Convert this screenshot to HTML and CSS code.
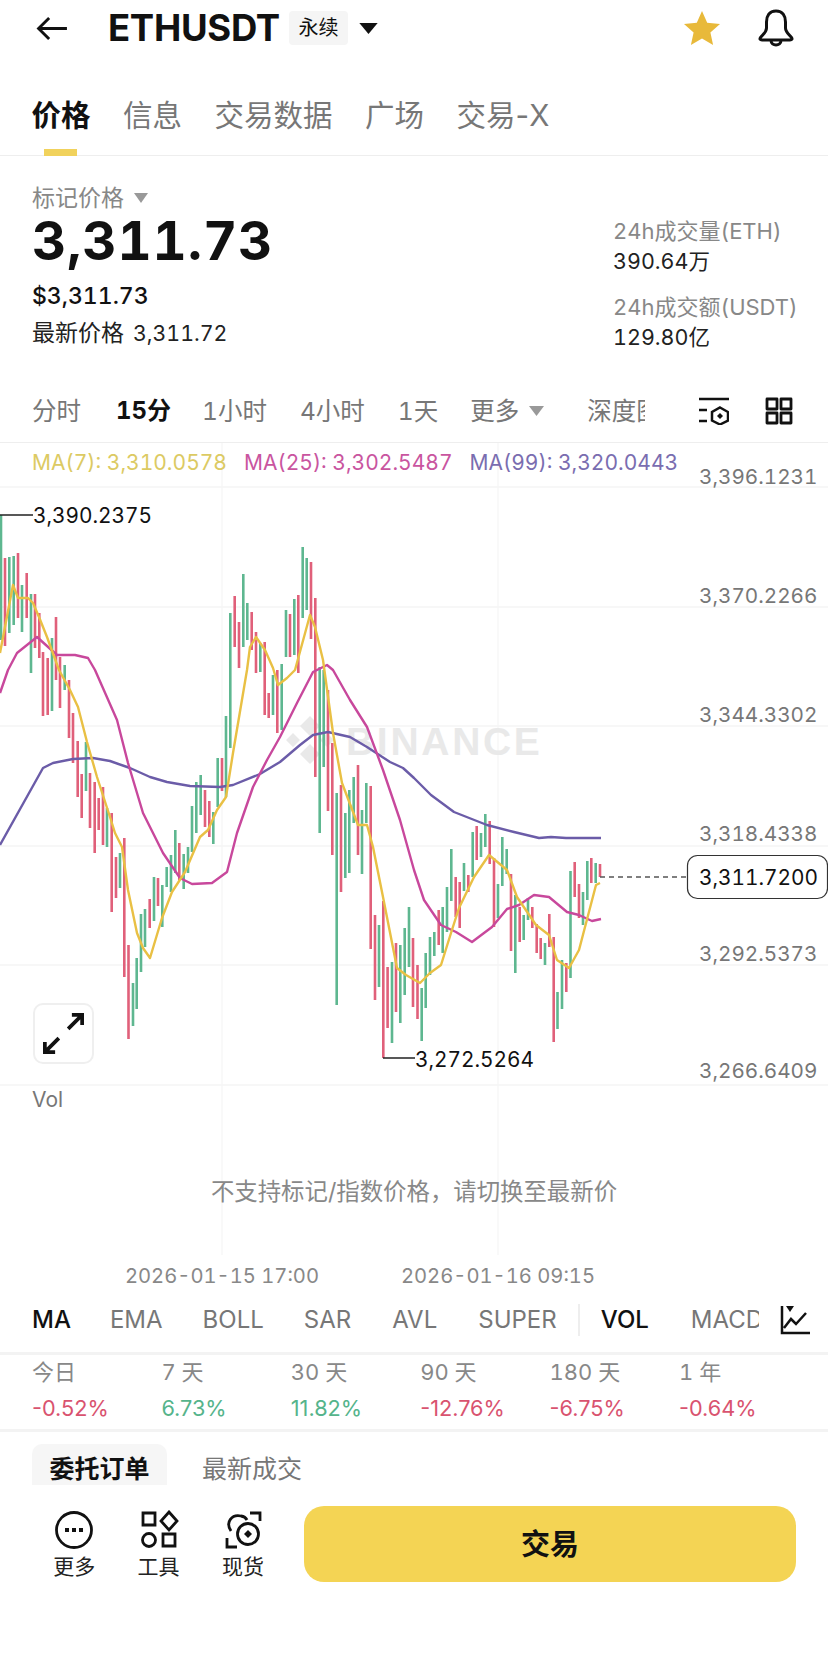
FILE: index.html
```html
<!DOCTYPE html>
<html lang="zh-CN">
<head>
<meta charset="utf-8">
<title>ETHUSDT</title>
<link rel="stylesheet" href="styles.css">
</head>
<body>
<div class="page">
  <header class="top">
    <svg class="ic-back" viewBox="0 0 34 26"><path d="M32 13H3M13.500 2 2.500 13 13.500 24"/></svg>
    <h1 class="symbol">ETHUSDT</h1>
    <span class="badge">永续</span>
    <svg class="caret-lg" viewBox="0 0 20 12"><path d="M0 0H20L10 12Z"/></svg>
    <svg class="ic-star" viewBox="0 0 36 34"><path d="M18 0 23.200 11.700 36 13 26.400 21.500 29.100 34 18 27.600 6.900 34 9.600 21.500 0 13 12.800 11.700Z"/></svg>
    <svg class="ic-bell" viewBox="0 0 38 38"><path d="M19 2C12 2 9.500 7.500 9.500 13V19C9.500 23 6.500 25 3.500 28.500 2.500 30 3 31 5 31H33C35 31 35.500 30 34.500 28.500 31.500 25 28.500 23 28.500 19V13C28.500 7.500 26 2 19 2ZM14 31.500C14 34.500 16.500 36 19 36S24 34.500 24 31.500"/></svg>
  </header>

  <nav class="tabs">
    <a class="tab tab-on">价格</a>
    <a class="tab">信息</a>
    <a class="tab">交易数据</a>
    <a class="tab">广场</a>
    <a class="tab">交易-X</a>
    <i class="tab-mark"></i>
  </nav>

  <section class="stats">
    <div class="stats-left">
      <div class="mark-label">标记价格<svg class="caret-sm" viewBox="0 0 14 10"><path d="M0 0H14L7 10Z"/></svg></div>
      <div class="big-price">3,311.73</div>
      <div class="usd-price">$3,311.73</div>
      <div class="last-price">最新价格<span class="last-num">3,311.72</span></div>
    </div>
    <div class="stats-right">
      <div class="stat-k">24h成交量(ETH)</div>
      <div class="stat-v">390.64万</div>
      <div class="stat-k stat-gap">24h成交额(USDT)</div>
      <div class="stat-v">129.80亿</div>
    </div>
  </section>

  <div class="intervals">
    <span class="iv iv-1">分时</span>
    <span class="iv iv-2">15分</span>
    <span class="iv iv-3">1小时</span>
    <span class="iv iv-4">4小时</span>
    <span class="iv iv-5">1天</span>
    <span class="iv iv-6">更多<svg class="caret-iv" viewBox="0 0 15 10"><path d="M0 0H15L7.500 10Z"/></svg></span>
    <span class="iv iv-7">深度图</span>
    <svg class="ic-layer" viewBox="0 0 30 28"><path d="M0 2H30M0 13H8M0 24H8"/><path d="M21 10.500 29 15V23.500L21 27.500 13 23.500V15Z"/><path class="fill" d="M21 16 24 19 21 22 18 19Z"/></svg>
    <svg class="ic-grid" viewBox="0 0 28 28"><path d="M2 2H12V12H2ZM16 2H26V12H16ZM2 16H12V26H2ZM16 16H26V26H16Z"/></svg>
  </div>

  <div class="chart">
    <svg class="chart-svg" viewBox="0 443 828 847">
      <path class="grid" d="M0 487H828M0 607H828M0 726H828M0 846H828M0 965H828M0 1085H828"/>
      <path class="grid-v" d="M222 443V1255M498 443V1255"/>
      <g class="wm">
        <path d="M310 716 320 726 310 736 300 726ZM293 733 300 740 293 747 286 740ZM327 733 334 740 327 747 320 740ZM310 744 320 754 310 764 300 754Z"/>
        <text class="wm-text" x="346" y="755">BINANCE</text>
      </g>
      <path class="bars-g" d="M1 515V640M9.300 557V633M13.700 556V625M22 585V632M31 594V673M52 638V711M64.700 665V690M86 742V791M107 808V847M120 853V888M133 983V1026M136.700 958V1009M141 914V972M145 909V947M154 877V921M162.300 885V927M166.700 867V887M171 855V892M175.300 830V873M183.700 854V889M188 847V873M192 806V852M196.300 782V833M200.700 775V815M213.300 812V844M217.700 758V807M226 716V797M230.300 613V748M243.300 574V647M247.300 603V640M260.300 643V672M273 675V715M281.700 664V730M286 610V657M294.300 599V655M302.700 547V618M306.700 558V610M319.700 667V833M323.700 670V767M336.700 793V1005M345.300 813V878M349.300 790V873M353.700 777V823M362 810V874M366.300 783V823M379 925V987M392 962V1043M400.300 945V1023M404.700 928V995M409 907V967M421.700 988V1041M425.700 953V1008M430 937V975M434.300 932V956M442.700 907V953M447 887V932M451.300 849V901M464 863V891M472.700 832V877M481 833V857M485.300 814V847M498 884V918M502.300 837V886M506.700 849V874M515.300 895V973M523.700 915V940M528 898V920M545 943V965M557.500 992V1029M562 960V1009M570.500 871V978M583 892V925M587.300 861V900M595.700 863V883"/>
      <path class="bars-r" d="M5 558V646M18 553V618M26.700 573V618M35 594V648M39.300 613V658M43 652V716M47.700 658V715M56 617V680M60 657V708M69 680V738M73 713V763M77.700 741V797M81.700 774V818M90 773V828M94.700 782V853M98.700 798V830M103 787V845M111.700 813V912M116 857V898M124.300 838V977M128.500 945V1039M149.700 899V928M158 878V906M179.300 843V880M205 790V827M209.300 801V837M222 758V791M234.700 596V647M239 622V668M251.700 612V650M256 632V673M264.700 642V715M268.700 693V718M277.300 670V733M290 614V657M298.300 595V673M311 562V639M315.300 598V777M328 690V811M332.300 743V855M341 785V892M358 765V855M370.700 786V949M375 915V1000M383.300 901V1058M387.600 967V1028M396 943V1012M413 938V1007M417.500 965V1019M438.700 910V945M455.700 877V917M459.700 882V928M468.300 875V892M476.700 826V860M489.700 821V864M494 858V927M511 874V951M519.700 907V942M532.300 907V928M536.700 924V953M540.700 938V959M549.300 914V947M553.700 937V1042M566.300 963V992M574.700 862V897M579 884V918M591.300 858V883M600 864V877"/>
      <polyline class="ma99" points="0,845 43,768 53,763 73,759 93,758 110,761 130,768 150,777 167,782 190,786 220,787 233,785 260,774 280,762 300,745 313,735 328,732 350,737 367,747 390,762 403,768 414,778 431,795 454,812 487,825 514,832 539,838 551,837 566,838 601,838"/>
      <polyline class="ma25" points="0,693 8,670 17,653 37,637 57,655 75,655 88,658 95,670 117,720 128,763 143,813 163,853 180,878 192,884 212,883 227,872 237,833 253,787 267,760 280,737 297,703 313,672 327,665 333,670 350,700 367,727 383,770 400,820 414,870 424,900 441,925 456,932 472,942 492,927 507,909 519,905 534,895 549,897 567,912 579,915 592,921 601,919"/>
      <polyline class="ma7" points="0,653 13,585 18,598 28,598 33,603 39,617 47,637 59,670 70,690 78,707 87,742 97,777 110,817 115,833 122,847 128,890 137,933 143,948 150,958 162,918 172,892 185,872 200,837 208,830 217,810 226,797 233,753 247,670 250,647 256,637 265,650 273,668 278,685 287,678 295,670 310,615 315,627 323,660 333,733 342,783 358,825 367,825 373,847 383,897 397,968 406,975 420,983 430,973 441,965 451,933 459,908 474,877 489,855 507,870 517,897 536,925 549,935 557,960 569,968 579,950 596,885 600,883"/>
      <path class="marker" d="M0 515H33M383 1058H415"/>
      <path class="dash" d="M600 877H687"/>
      <text class="lbl" x="33" y="523">3,390.2375</text>
      <text class="lbl" x="415" y="1067">3,272.5264</text>
      <text class="axis" x="699" y="484">3,396.1231</text>
      <text class="axis" x="699" y="603">3,370.2266</text>
      <text class="axis" x="699" y="722">3,344.3302</text>
      <text class="axis" x="699" y="841">3,318.4338</text>
      <text class="axis" x="699" y="961">3,292.5373</text>
      <text class="axis" x="699" y="1078">3,266.6409</text>
      <rect class="tag" x="687.500" y="855.500" width="140" height="43" rx="10"/>
      <text class="lbl" x="699" y="885">3,311.7200</text>
      <text class="vol" x="32" y="1107">Vol</text>
      <text class="note" x="414" y="1200">不支持标记/指数价格，请切换至最新价</text>
      <text class="date" x="222" y="1283">2026-01-15 17:00</text>
      <text class="date" x="498" y="1283">2026-01-16 09:15</text>
    </svg>
    <div class="ma-row">
      <span class="ma-y">MA(7): 3,310.0578</span>
      <span class="ma-p">MA(25): 3,302.5487</span>
      <span class="ma-v">MA(99): 3,320.0443</span>
    </div>
    <button class="expand">
      <svg viewBox="0 0 44 44"><path d="M2 42 17 27M2 31V42H13M42 2 27 17M31 2H42V13"/></svg>
    </button>
  </div>

  <div class="inds">
    <span class="ind ind-on">MA</span>
    <span class="ind ind-b">EMA</span>
    <span class="ind ind-c">BOLL</span>
    <span class="ind ind-d">SAR</span>
    <span class="ind ind-e">AVL</span>
    <span class="ind ind-f">SUPER</span>
    <i class="ind-div"></i>
    <span class="ind ind-on ind-g">VOL</span>
    <span class="ind ind-h">MACD</span>
    <svg class="ic-kline" viewBox="0 0 30 30"><path d="M2 1V28H30M4 23 11 14 16 19 26 8"/><path class="fill" d="M6 1H14L10 7Z"/></svg>
  </div>

  <div class="perf">
    <div class="perf-c"><span class="perf-k">今日</span><span class="perf-v neg">-0.52%</span></div>
    <div class="perf-c"><span class="perf-k">7 天</span><span class="perf-v pos">6.73%</span></div>
    <div class="perf-c"><span class="perf-k">30 天</span><span class="perf-v pos">11.82%</span></div>
    <div class="perf-c"><span class="perf-k">90 天</span><span class="perf-v neg">-12.76%</span></div>
    <div class="perf-c"><span class="perf-k">180 天</span><span class="perf-v neg">-6.75%</span></div>
    <div class="perf-c"><span class="perf-k">1 年</span><span class="perf-v neg">-0.64%</span></div>
  </div>

  <div class="book-tabs">
    <span class="book-tab book-on">委托订单</span>
    <span class="book-tab">最新成交</span>
  </div>

  <footer class="bar">
    <div class="tool">
      <svg viewBox="0 0 40 40"><circle cx="20" cy="20" r="17.500"/><path class="fill" d="M11 18H15V22H11ZM18 18H22V22H18ZM25 18H29V22H25Z"/></svg>
      <span>更多</span>
    </div>
    <div class="tool">
      <svg viewBox="0 0 40 40"><path d="M4 3H16V15H4ZM30 2 38 11 30 20 22 11ZM24 24H36V36H24Z"/><circle cx="10" cy="30" r="6.500"/></svg>
      <span>工具</span>
    </div>
    <div class="tool">
      <svg viewBox="0 0 40 40"><path d="M27 3H37V11M14 37H4V28"/><path d="M8 21C2 12 9 4 18 6 21 6.500 23 8 24 10"/><circle cx="25" cy="24" r="10.500"/><path class="fill" d="M25 20 29 24 25 28 21 24Z"/></svg>
      <span>现货</span>
    </div>
    <button class="trade">交易</button>
  </footer>
</div>
</body>
</html>
```
FILE: styles.css
```css
* { box-sizing: border-box; }
html, body { margin: 0; padding: 0; background: #fff; }
body { font-family: Inter, "Noto Sans CJK SC", sans-serif; font-variant-numeric: tabular-nums; color: #111; }
.page { width: 828px; height: 1676px; overflow: hidden; }
svg { display: block; }

/* header */
.top { display: flex; align-items: center; height: 56px; padding-left: 36px; }
.ic-back { width: 33px; height: 25px; fill: none; stroke: #111; stroke-width: 3; }
.symbol { margin: 0 0 0 39px; font-size: 36.500px; line-height: 40px; font-weight: 700; letter-spacing: -0.3px; }
.badge { margin-left: 9px; width: 59px; height: 34px; background: #f5f5f5; border-radius: 4px; font-size: 20px; line-height: 34px; text-align: center; }
.caret-lg { margin-left: 11px; width: 19px; height: 11px; fill: #111; }
.ic-star { margin-left: 306px; width: 36px; height: 34px; fill: #e8b93a; }
.ic-bell { margin-left: 37px; width: 38px; height: 38px; fill: none; stroke: #111; stroke-width: 3; }

/* tabs */
.tabs { position: relative; display: flex; height: 100px; padding: 37px 0 0 31.500px; gap: 32.500px; border-bottom: 1px solid #eee; }
.tab { font-size: 29.500px; line-height: 44px; color: #777; font-variant-numeric: normal; }
.tab-on { color: #111; font-weight: 700; }
.tab-mark { position: absolute; left: 44px; bottom: -1px; width: 33px; height: 7px; background: #f1d25c; }

/* stats */
.stats { display: flex; justify-content: space-between; height: 224px; padding-left: 32px; }
.stats-left { padding-top: 28px; }
.mark-label { display: flex; align-items: center; font-size: 23px; line-height: 28px; color: #888; }
.caret-sm { margin-left: 10px; width: 14px; height: 10px; fill: #999; }
.big-price { margin-top: 1px; font-size: 53px; line-height: 56px; font-weight: 700; letter-spacing: 0.900px; }
.usd-price { margin-top: 11px; font-size: 23px; line-height: 32px; font-weight: 500; }
.last-price { margin-top: 5px; font-size: 23px; line-height: 32px; color: #222; }
.last-num { margin-left: 9px; font-size: 21.300px; }
.stats-right { width: 215px; padding-top: 60px; }
.stat-k { font-size: 22px; line-height: 30px; color: #888; }
.stat-v { font-size: 21.500px; line-height: 30px; color: #222; }
.stat-gap { margin-top: 16px; }

/* intervals */
.intervals { display: flex; align-items: center; height: 63px; padding-left: 32px; border-bottom: 1px solid #eee; }
.iv { flex: none; font-size: 24.500px; line-height: 34px; color: #777; white-space: nowrap; }
.iv-2 { margin-left: 35px; color: #111; font-size: 24px; font-weight: 700; }
.iv-3 { margin-left: 31px; }
.iv-4 { margin-left: 33px; }
.iv-5 { margin-left: 33px; }
.iv-6 { margin-left: 32px; display: flex; align-items: center; }
.iv-7 { margin-left: 43px; width: 58px; overflow: hidden; }
.caret-iv { margin-left: 10px; width: 15px; height: 10px; fill: #999; }
.ic-layer { margin-left: 54px; width: 30px; height: 28px; fill: none; stroke: #111; stroke-width: 2.500; }
.ic-layer .fill { fill: #111; stroke: none; }
.ic-grid { margin-left: 36px; width: 28px; height: 28px; fill: none; stroke: #111; stroke-width: 2.800; stroke-linejoin: round; }

/* chart */
.chart { position: relative; height: 847px; }
.chart-svg { width: 828px; height: 847px; }
.grid { fill: none; stroke: #f0f0f0; stroke-width: 1.200; }
.grid-v { fill: none; stroke: #f5f5f5; stroke-width: 1.200; }
.wm { fill: #e9e9e9; }
.wm-text { font-family: "Liberation Sans", sans-serif; font-size: 39px; font-weight: 700; letter-spacing: 2.700px; }
.bars-g { fill: none; stroke: #5eb790; stroke-width: 2.600; }
.bars-r { fill: none; stroke: #e0607a; stroke-width: 2.600; }
.ma7, .ma25, .ma99 { fill: none; stroke-width: 2.400; stroke-linejoin: round; }
.ma7 { stroke: #e9c044; }
.ma25 { stroke: #c8489c; }
.ma99 { stroke: #6b5ca8; }
.marker { fill: none; stroke: #222; stroke-width: 1.500; }
.dash { fill: none; stroke: #555; stroke-width: 1.500; stroke-dasharray: 5 4; }
.lbl { font-size: 20.800px; fill: #111; }
.axis { font-size: 20.700px; fill: #777; }
.tag { fill: #fff; stroke: #333; stroke-width: 1.200; }
.vol { font-size: 21px; fill: #777; }
.note { font-size: 23.400px; fill: #888; text-anchor: middle; }
.date { font-size: 20.200px; fill: #888; text-anchor: middle; }
.ma-row { position: absolute; left: 32px; top: 4px; display: flex; gap: 17px; font-size: 21px; line-height: 32px; white-space: nowrap; }
.ma-y { color: #dcca63; }
.ma-p { color: #c9559f; }
.ma-v { color: #7a6db0; }
.expand { position: absolute; left: 33px; top: 560px; width: 61px; height: 61px; padding: 8px; background: #fff; border: 2px solid #efefef; border-radius: 10px; }
.expand svg { width: 41px; height: 41px; fill: none; stroke: #111; stroke-width: 4; }

/* indicators */
.inds { display: flex; align-items: center; height: 65px; padding: 0 0 2px 32px; border-bottom: 3px solid #f3f3f3; }
.ind { flex: none; font-size: 24px; line-height: 34px; color: #777; white-space: nowrap; }
.ind-on { color: #111; font-weight: 500; }
.ind-b { margin-left: 39px; }
.ind-c { margin-left: 40px; }
.ind-d { margin-left: 40px; }
.ind-e { margin-left: 41px; }
.ind-f { margin-left: 41px; }
.ind-div { flex: none; margin-left: 21px; width: 2px; height: 32px; background: #eee; }
.ind-g { margin-left: 21px; }
.ind-h { margin-left: 42px; width: 68px; overflow: hidden; }
.ic-kline { margin-left: 21px; width: 30px; height: 30px; fill: none; stroke: #111; stroke-width: 2.500; }
.ic-kline .fill { fill: #111; stroke: none; }

/* performance */
.perf { display: grid; grid-template-columns: repeat(6, 129.400px); height: 77px; padding: 0 0 0 32px; border-bottom: 3px solid #f3f3f3; }
.perf-c { display: flex; flex-direction: column; }
.perf-k { font-size: 22px; line-height: 34px; color: #888; }
.perf-v { margin-top: 2px; font-size: 21.700px; line-height: 34px; font-variant-numeric: normal; }
.neg { color: #d9536f; }
.pos { color: #55b48b; }

/* book tabs */
.book-tabs { display: flex; height: 53px; padding: 12px 0 0 32px; }
.book-tab { width: 135px; height: 41px; padding-top: 6px; font-size: 25px; line-height: 38px; text-align: center; color: #777; overflow: hidden; }
.book-on { background: #f6f6f6; border-radius: 10px 10px 0 0; color: #111; font-weight: 700; }
.book-tab + .book-tab { width: auto; margin-left: 35px; }

/* bottom bar */
.bar { display: flex; align-items: flex-start; padding: 21px 0 0 32.300px; }
.tool { display: flex; flex-direction: column; align-items: center; width: 85px; margin-left: -0.600px; padding-top: 4px; }
.tool svg { width: 40px; height: 40px; fill: none; stroke: #111; stroke-width: 2.800; }
.tool .fill { fill: #111; stroke: none; }
.tool span { margin-top: 3px; font-size: 21px; line-height: 28px; color: #222; }
.trade { flex: none; margin-left: 18.500px; width: 492px; height: 76px; padding: 0 0 4px; border: 0; border-radius: 20px; background: #f4d454; font: 700 29px Inter, "Noto Sans CJK SC", sans-serif; color: #111; }
```
